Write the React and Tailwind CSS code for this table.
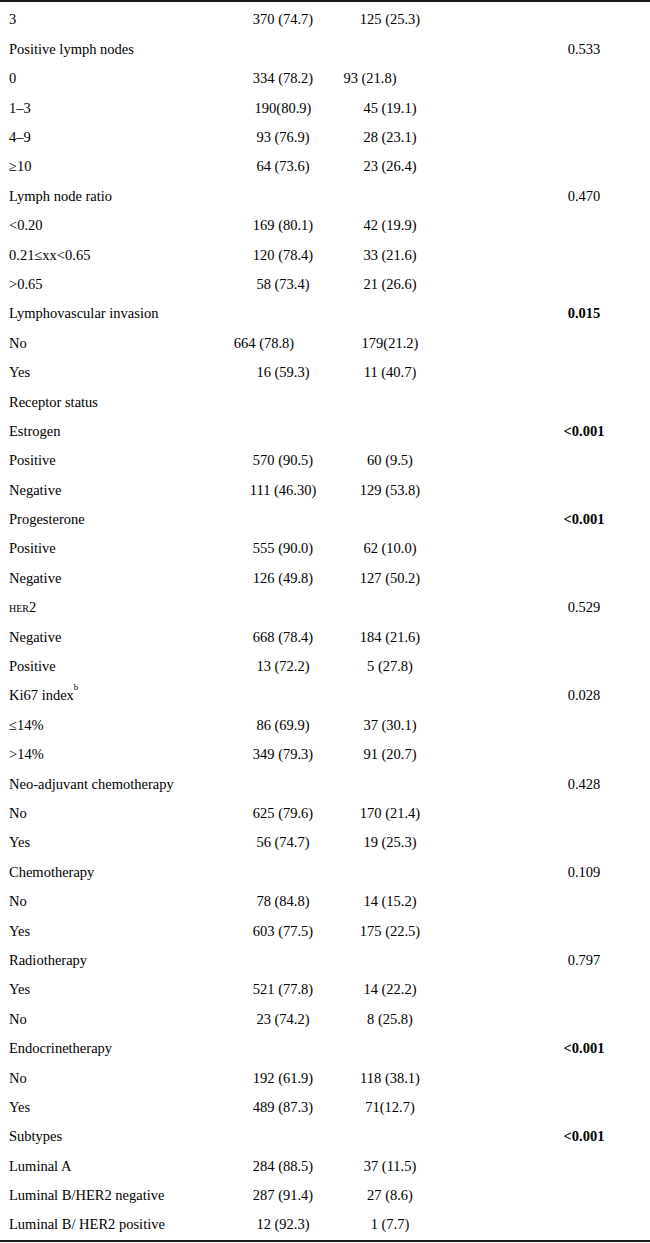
const rows = [
  { label: '3', a: '370 (74.7)', b: '125 (25.3)' },
  { label: 'Positive lymph nodes', p: '0.533' },
  { label: '0', a: '334 (78.2)', b: '93 (21.8)', bShift: true },
  { label: '1–3', a: '190(80.9)', b: '45 (19.1)' },
  { label: '4–9', a: '93 (76.9)', b: '28 (23.1)' },
  { label: '≥10', a: '64 (73.6)', b: '23 (26.4)' },
  { label: 'Lymph node ratio', p: '0.470' },
  { label: '<0.20', a: '169 (80.1)', b: '42 (19.9)' },
  { label: '0.21≤xx<0.65', a: '120 (78.4)', b: '33 (21.6)' },
  { label: '>0.65', a: '58 (73.4)', b: '21 (26.6)' },
  { label: 'Lymphovascular invasion', p: '0.015', bold: true },
  { label: 'No', a: '664 (78.8)', b: '179(21.2)', aShift: true },
  { label: 'Yes', a: '16 (59.3)', b: '11 (40.7)' },
  { label: 'Receptor status' },
  { label: 'Estrogen', p: '<0.001', bold: true },
  { label: 'Positive', a: '570 (90.5)', b: '60 (9.5)' },
  { label: 'Negative', a: '111 (46.30)', b: '129 (53.8)' },
  { label: 'Progesterone', p: '<0.001', bold: true },
  { label: 'Positive', a: '555 (90.0)', b: '62 (10.0)' },
  { label: 'Negative', a: '126 (49.8)', b: '127 (50.2)' },
  { label: 'her2', p: '0.529', her: true },
  { label: 'Negative', a: '668 (78.4)', b: '184 (21.6)' },
  { label: 'Positive', a: '13 (72.2)', b: '5 (27.8)' },
  { label: 'Ki67 index', p: '0.028', sup: 'b' },
  { label: '≤14%', a: '86 (69.9)', b: '37 (30.1)' },
  { label: '>14%', a: '349 (79.3)', b: '91 (20.7)' },
  { label: 'Neo-adjuvant chemotherapy', p: '0.428' },
  { label: 'No', a: '625 (79.6)', b: '170 (21.4)' },
  { label: 'Yes', a: '56 (74.7)', b: '19 (25.3)' },
  { label: 'Chemotherapy', p: '0.109' },
  { label: 'No', a: '78 (84.8)', b: '14 (15.2)' },
  { label: 'Yes', a: '603 (77.5)', b: '175 (22.5)' },
  { label: 'Radiotherapy', p: '0.797' },
  { label: 'Yes', a: '521 (77.8)', b: '14 (22.2)' },
  { label: 'No', a: '23 (74.2)', b: '8 (25.8)' },
  { label: 'Endocrinetherapy', p: '<0.001', bold: true },
  { label: 'No', a: '192 (61.9)', b: '118 (38.1)' },
  { label: 'Yes', a: '489 (87.3)', b: '71(12.7)' },
  { label: 'Subtypes', p: '<0.001', bold: true },
  { label: 'Luminal A', a: '284 (88.5)', b: '37 (11.5)' },
  { label: 'Luminal B/HER2 negative', a: '287 (91.4)', b: '27 (8.6)' },
  { label: 'Luminal B/ HER2 positive', a: '12 (92.3)', b: '1 (7.7)' },
]

function Label({ r }) {
  if (r.her) {
    return (
      <span>
        <span className="[font-variant:small-caps]">her</span>2
      </span>
    )
  }
  return (
    <span>
      {r.label}
      {r.sup && <sup className="text-[9px] align-[6px]">{r.sup}</sup>}
    </span>
  )
}

export default function App() {
  return (
    <div className="w-[650px] bg-white font-['Liberation_Serif','Times_New_Roman',serif] text-[14.5px] text-black border-t-2 border-b-2 border-[#1c1c1c] pt-[3px] pb-[1px]">
      {rows.map((r, i) => (
        <div
          key={i}
          className="grid h-[29.4px] grid-cols-[230px_106px_108px_86px_108px] items-center leading-none"
        >
          <div className="pl-[9px] whitespace-nowrap">
            <Label r={r} />
          </div>
          <div className={`text-center whitespace-nowrap ${r.aShift ? 'pr-[38px]' : ''}`}>{r.a}</div>
          <div className={`text-center whitespace-nowrap ${r.bShift ? 'pr-[40px]' : ''}`}>{r.b}</div>
          <div />
          <div className={`text-center ${r.bold ? 'font-bold' : ''}`}>{r.p}</div>
        </div>
      ))}
    </div>
  )
}
